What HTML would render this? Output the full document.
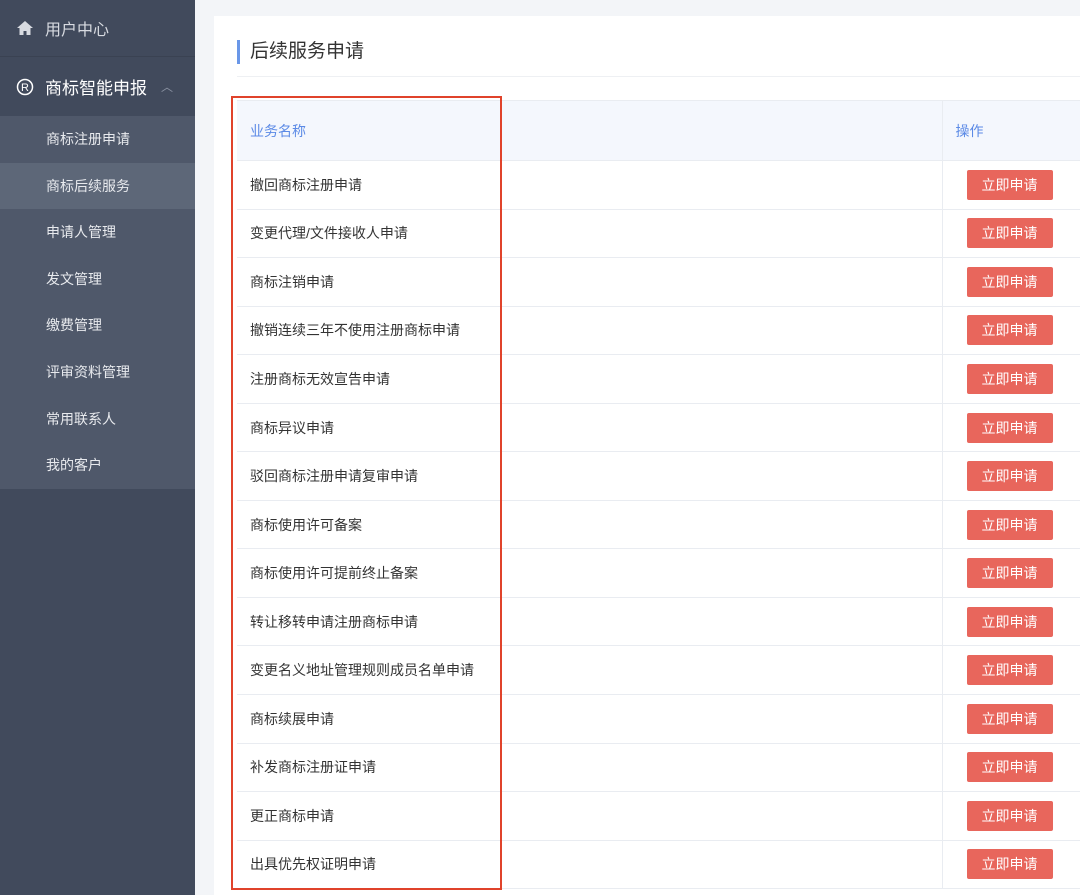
<!DOCTYPE html>
<html style="width:1080px;height:895px;overflow:hidden"><head><meta charset="utf-8"><style>
*{margin:0;padding:0;box-sizing:border-box}
body{width:1080px;height:895px;overflow:hidden;background:#f3f5f8;font-family:"Liberation Sans","Noto Sans CJK SC",sans-serif;position:relative}
.side{position:absolute;left:0;top:0;width:195px;height:895px;background:#414a5c;color:#e6e8ec}
.top{height:57px;border-bottom:1px solid #3a4252;display:flex;align-items:center;padding-left:16px;font-size:16px;color:#d8dbe1}
.sec{height:59px;display:flex;align-items:center;padding-left:16px;font-size:17px;color:#fff}
.sub{background:#4f586a}
.sub div{height:46.6px;line-height:46.6px;padding-left:46px;font-size:14px;color:#e8eaee}
.sub .act{background:#5d6778}
.card{position:absolute;left:214px;top:16px;width:866px;height:879px;background:#fff}
.title{position:absolute;left:237px;top:40px;height:24px;border-left:3px solid #6a97e8;padding-left:10px;font-size:19px;line-height:24px;color:#333}
.hr{position:absolute;left:237px;top:76px;width:843px;height:1px;background:#eef0f3}
table{position:absolute;left:237px;top:100px;width:860px;border-collapse:collapse}
td,th{border-bottom:1px solid #e9ecf1;font-size:14px;color:#333;text-align:left;font-weight:normal}
th{height:60px;background:#f4f7fd;color:#5b8ae6;padding-left:13px;border-top:1px solid #e9ecf1}
td{height:48.55px;padding-left:13px}
td.op,th.op{width:155px;border-left:1px solid #e9ecf1}
th.c1,td.c1{width:705px}
td.op{padding-left:24px}
.b{display:inline-block;width:86px;height:30px;line-height:30px;text-align:center;background:#e8665c;color:#fff;border-radius:2px;font-size:14px}
.red{position:absolute;left:231px;top:96px;width:271px;height:794px;border:2px solid #e0432b}
</style></head><body>
<div class="side">
<div class="top"><svg width="18" height="16" viewBox="0 0 18 16"><path d="M9 1L1 8h2.5v7h4v-4h3v4h4V8H17z" fill="#d8dbe1"/></svg><span style="margin-left:11px">用户中心</span></div>
<div class="sec"><svg width="18" height="18" viewBox="0 0 18 18"><circle cx="9" cy="9" r="7.5" fill="none" stroke="#fff" stroke-width="1.5"/><text x="9" y="13" font-size="11" text-anchor="middle" fill="#fff" font-family="Liberation Sans">R</text></svg><span style="margin-left:11px">商标智能申报</span><span style="margin-left:14px;color:#8a92a2;font-size:12px">︿</span></div>
<div class="sub"><div>商标注册申请</div><div class="act">商标后续服务</div><div>申请人管理</div><div>发文管理</div><div>缴费管理</div><div>评审资料管理</div><div>常用联系人</div><div>我的客户</div></div>
</div>
<div class="card"></div>
<div class="title">后续服务申请</div>
<div class="hr"></div>
<table>
<tr><th class="c1">业务名称</th><th class="op">操作</th></tr>
<tr><td class="c1">撤回商标注册申请</td><td class="op"><span class="b">立即申请</span></td></tr>
<tr><td class="c1">变更代理/文件接收人申请</td><td class="op"><span class="b">立即申请</span></td></tr>
<tr><td class="c1">商标注销申请</td><td class="op"><span class="b">立即申请</span></td></tr>
<tr><td class="c1">撤销连续三年不使用注册商标申请</td><td class="op"><span class="b">立即申请</span></td></tr>
<tr><td class="c1">注册商标无效宣告申请</td><td class="op"><span class="b">立即申请</span></td></tr>
<tr><td class="c1">商标异议申请</td><td class="op"><span class="b">立即申请</span></td></tr>
<tr><td class="c1">驳回商标注册申请复审申请</td><td class="op"><span class="b">立即申请</span></td></tr>
<tr><td class="c1">商标使用许可备案</td><td class="op"><span class="b">立即申请</span></td></tr>
<tr><td class="c1">商标使用许可提前终止备案</td><td class="op"><span class="b">立即申请</span></td></tr>
<tr><td class="c1">转让移转申请注册商标申请</td><td class="op"><span class="b">立即申请</span></td></tr>
<tr><td class="c1">变更名义地址管理规则成员名单申请</td><td class="op"><span class="b">立即申请</span></td></tr>
<tr><td class="c1">商标续展申请</td><td class="op"><span class="b">立即申请</span></td></tr>
<tr><td class="c1">补发商标注册证申请</td><td class="op"><span class="b">立即申请</span></td></tr>
<tr><td class="c1">更正商标申请</td><td class="op"><span class="b">立即申请</span></td></tr>
<tr><td class="c1">出具优先权证明申请</td><td class="op"><span class="b">立即申请</span></td></tr>
</table>
<div class="red"></div>
</body></html>
